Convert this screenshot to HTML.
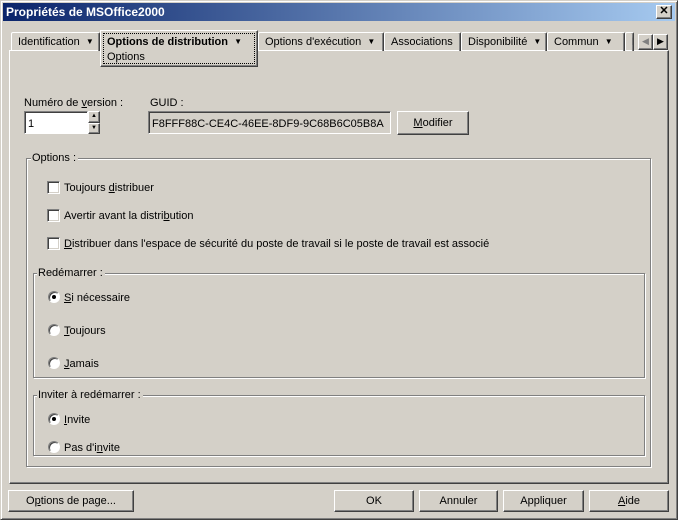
<!DOCTYPE html>
<html><head><meta charset="utf-8"><style>
*{box-sizing:border-box;margin:0;padding:0}
body{width:678px;height:520px;background:#d4d0c8;font:11px "Liberation Sans",sans-serif;color:#000;position:relative;overflow:hidden}
.a{position:absolute}
.win{left:0;top:0;width:678px;height:520px;border:1px solid;border-color:#d4d0c8 #404040 #404040 #d4d0c8;box-shadow:inset 1px 1px #fff,inset -1px -1px #808080}
.title{left:3px;top:3px;width:672px;height:18px;background:linear-gradient(90deg,#0a246a,#a6caf0);color:#fff;font-weight:bold;font-size:12px;padding:2px 0 0 3px}
.close{left:656px;top:5px;width:16px;height:14px;background:#d4d0c8;border:1px solid;border-color:#fff #404040 #404040 #fff;box-shadow:inset -1px -1px #808080;font-size:11px;font-weight:bold;text-align:center;line-height:11px}
.btn{background:#d4d0c8;border:1px solid;border-color:#fff #404040 #404040 #fff;box-shadow:inset -1px -1px #808080;text-align:center;line-height:21px}
.tab{top:32px;height:19px;border:1px solid;border-color:#fff #404040 transparent #fff;border-bottom:none;box-shadow:inset -1px 0 #808080;border-radius:2px 2px 0 0;padding:3px 0 0 6px;white-space:nowrap;overflow:hidden}
.ar{font-size:8px;vertical-align:1px}
.panel{left:9px;top:50px;width:660px;height:434px;border:1px solid;border-color:#fff #404040 #404040 #fff;box-shadow:inset -1px -1px #808080}
.grp{border:1px solid #808080;box-shadow:1px 1px #fff,inset 1px 1px #fff}
.gl{background:#d4d0c8;padding:0 2px 0 1px}
.cb{width:13px;height:13px;background:#fff;border:1px solid;border-color:#808080 #fff #fff #808080;box-shadow:inset 1px 1px #404040,inset -1px -1px #d4d0c8}
.rd{width:12px;height:12px;border-radius:50%;background:#fff;border:1px solid;border-color:#808080 #fff #fff #808080;box-shadow:inset 1px 1px #404040}
.rd.on::after{content:"";position:absolute;left:3px;top:3px;width:4px;height:4px;border-radius:50%;background:#000}
.fld{border:1px solid;border-color:#808080 #fff #fff #808080;box-shadow:inset 1px 1px #404040}
.t{margin-top:1px}
u{text-decoration:underline}
</style></head><body>
<div class="a win"></div>
<div class="a title">Propriétés de MSOffice2000</div>
<div class="a close">✕</div>

<div class="a panel"></div>
<div class="a tab" style="left:11px;width:89px">Identification &nbsp;<span class="ar">▼</span></div>
<div class="a tab" style="left:258px;width:126px">Options d'exécution &nbsp;<span class="ar">▼</span></div>
<div class="a tab" style="left:384px;width:77px">Associations</div>
<div class="a tab" style="left:461px;width:86px">Disponibilité &nbsp;<span class="ar">▼</span></div>
<div class="a tab" style="left:547px;width:78px">Commun &nbsp;<span class="ar">▼</span></div>
<div class="a tab" style="left:625px;width:9px">N</div>
<div class="a" style="left:100px;top:30px;width:158px;height:37px;background:#d4d0c8;border:1px solid;border-color:#fff #404040 #404040 #fff;box-shadow:inset -1px -1px #808080"></div>
<div class="a" style="left:103px;top:33px;width:152px;height:31px;border:1px dotted #000"></div>
<div class="a" style="left:107px;top:36px;font-weight:bold">Options de distribution &nbsp;<span class="ar">▼</span></div>
<div class="a" style="left:107px;top:51px">Options</div>
<div class="a btn" style="left:638px;top:34px;width:15px;height:16px;line-height:13px;color:#808080;font-size:9px">◀</div>
<div class="a btn" style="left:653px;top:34px;width:15px;height:16px;line-height:13px;font-size:9px">▶</div>

<div class="a" style="left:24px;top:97px">Numéro de <u>v</u>ersion :</div>
<div class="a fld" style="left:24px;top:111px;width:64px;height:23px;background:#fff;padding:6px 3px">1</div>
<div class="a btn" style="left:88px;top:111px;width:12px;height:12px;line-height:8px;font-size:6px">▲</div>
<div class="a btn" style="left:88px;top:123px;width:12px;height:11px;line-height:8px;font-size:6px">▼</div>
<div class="a" style="left:150px;top:97px">GUID :</div>
<div class="a fld" style="left:148px;top:111px;width:243px;height:23px;padding:6px 3px">F8FFF88C-CE4C-46EE-8DF9-9C68B6C05B8A</div>
<div class="a btn" style="left:397px;top:111px;width:72px;height:24px;line-height:23px"><u>M</u>odifier</div>

<div class="a grp" style="left:26px;top:158px;width:625px;height:309px"></div>
<div class="a gl" style="left:31px;top:152px">Options :</div>
<div class="a cb" style="left:47px;top:181px"></div><div class="a t" style="left:64px;top:181px">Toujours <u>d</u>istribuer</div>
<div class="a cb" style="left:47px;top:209px"></div><div class="a t" style="left:64px;top:209px">Avertir avant la distri<u>b</u>ution</div>
<div class="a cb" style="left:47px;top:237px"></div><div class="a t" style="left:64px;top:237px"><u>D</u>istribuer dans l'espace de sécurité du poste de travail si le poste de travail est associé</div>

<div class="a grp" style="left:33px;top:273px;width:612px;height:105px"></div>
<div class="a gl" style="left:37px;top:267px">Redémarrer :</div>
<div class="a rd on" style="left:48px;top:291px"></div><div class="a t" style="left:64px;top:291px"><u>S</u>i nécessaire</div>
<div class="a rd" style="left:48px;top:324px"></div><div class="a t" style="left:64px;top:324px"><u>T</u>oujours</div>
<div class="a rd" style="left:48px;top:357px"></div><div class="a t" style="left:64px;top:357px"><u>J</u>amais</div>

<div class="a grp" style="left:33px;top:395px;width:612px;height:61px"></div>
<div class="a gl" style="left:37px;top:389px">Inviter à redémarrer :</div>
<div class="a rd on" style="left:48px;top:413px"></div><div class="a t" style="left:64px;top:413px"><u>I</u>nvite</div>
<div class="a rd" style="left:48px;top:441px"></div><div class="a t" style="left:64px;top:441px">Pas d'i<u>n</u>vite</div>

<div class="a btn" style="left:8px;top:490px;width:126px;height:22px">O<u>p</u>tions de page...</div>
<div class="a btn" style="left:334px;top:490px;width:80px;height:22px">OK</div>
<div class="a btn" style="left:419px;top:490px;width:79px;height:22px">Annuler</div>
<div class="a btn" style="left:503px;top:490px;width:81px;height:22px">Appliquer</div>
<div class="a btn" style="left:589px;top:490px;width:80px;height:22px"><u>A</u>ide</div>
</body></html>
